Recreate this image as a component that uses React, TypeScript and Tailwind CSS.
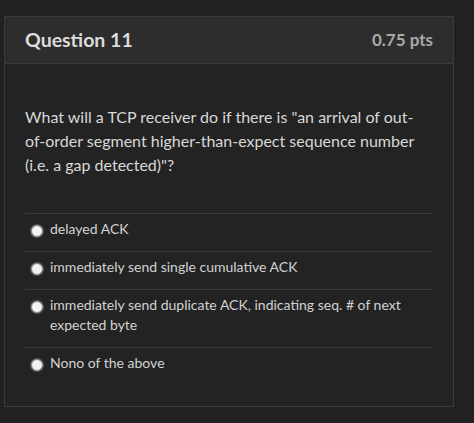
const OPTIONS = [
  ['delayed ACK'],
  ['immediately send single cumulative ACK'],
  ['immediately send duplicate ACK, indicating seq. # of next', 'expected byte'],
  ['Nono of the above'],
];

function Radio() {
  return (
    <span className="mt-[6px] block h-[12px] w-[12px] shrink-0 rounded-full border border-[#8a8a8a] bg-[#f2f2f2] shadow-[0_0_0_1px_#555]" />
  );
}

export default function App() {
  return (
    <div className="h-[423px] w-[474px] bg-[#212121] pt-[16px] pl-[4px] font-['Lato','Noto_Sans',sans-serif]">
      <div className="w-[450px] border border-[#3b3b3b] bg-[#232323]">
        <div className="flex h-[47px] items-center justify-between border-b border-[#3b3b3b] bg-[#2d2d2d] px-[20px]">
          <h2 className="text-[19.5px] font-bold text-[#dcdcdc]">Question 11</h2>
          <span className="text-[17px] font-bold text-[#a9a9a9]">0.75 pts</span>
        </div>
        <div className="px-[20px] pt-[41px] pb-[21px]">
          <p className="text-[16px] leading-[24px] text-[#d8d8d8]">
            What will a TCP receiver do if there is "an arrival of out-of-order segment higher-than-expect sequence number (i.e. a gap detected)"?
          </p>
          <div className="mt-[36px]">
            {OPTIONS.map((lines, i) => (
              <div key={i} className="flex gap-[7px] border-t border-[#3b3b3b] pt-[5px] pb-[12px] pl-[6px]">
                <Radio />
                <div className="text-[14px] leading-[20px] text-[#d2d2d2]">
                  {lines.map((l, j) => (
                    <div key={j}>{l}</div>
                  ))}
                </div>
              </div>
            ))}
          </div>
        </div>
      </div>
    </div>
  );
}
